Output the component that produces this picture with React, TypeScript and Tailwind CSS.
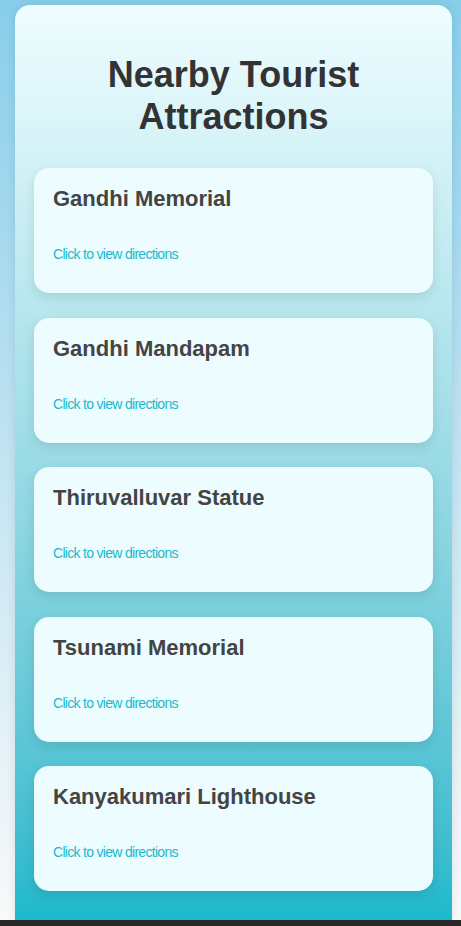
const places = [
  "Gandhi Memorial",
  "Gandhi Mandapam",
  "Thiruvalluvar Statue",
  "Tsunami Memorial",
  "Kanyakumari Lighthouse",
];

const PlaceCard = ({ name }: { name: string }) => {
  return (
    <div className="h-[125px] rounded-[15px] bg-[#edfcff] px-[19px] pt-[18px] shadow-[0_4px_12px_rgba(0,0,0,0.1)]">
      <h3 className="text-[22px] leading-[normal] font-bold text-[#444]">{name}</h3>
      <p className="mt-[34px] text-[14px] leading-[normal] tracking-[-0.7px] text-[#1ab9cd]">
        Click to view directions
      </p>
    </div>
  );
};

export default function App() {
  return (
    <div
      className="min-h-[926px] bg-gradient-to-b from-[#87ceeb] to-[#fafafa] pt-[5px]"
      style={{ fontFamily: '"Liberation Sans", Arial, sans-serif' }}
    >
      <div className="ml-[15px] w-[437px] rounded-t-[15px] bg-gradient-to-b from-[#effdff] to-[#1ab8cc] px-[19px] pt-[49px] pb-[30px] shadow-[0_0_10px_rgba(0,0,0,0.1)]">
        <h1 className="text-center text-[36px] leading-[normal] font-bold text-[#333]">
          Nearby Tourist Attractions
        </h1>
        <div className="mt-[30px] flex flex-col gap-[24.5px]">
          {places.map((p) => (
            <PlaceCard key={p} name={p} />
          ))}
        </div>
      </div>
      <div className="fixed bottom-0 left-0 h-[6px] w-full bg-[#282828]" />
    </div>
  );
}
